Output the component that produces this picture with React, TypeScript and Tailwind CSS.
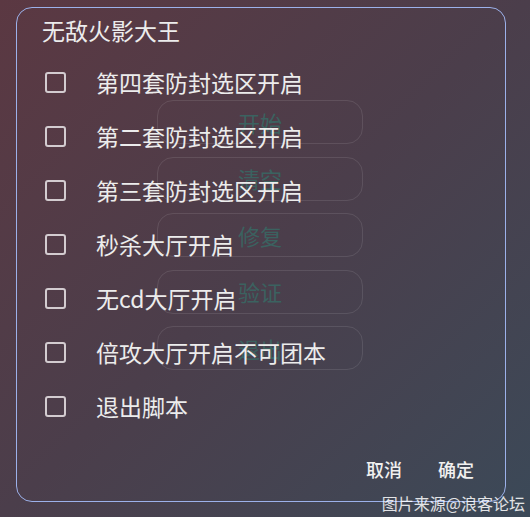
export default function App() {
  const options = [
    "第四套防封选区开启",
    "第二套防封选区开启",
    "第三套防封选区开启",
    "秒杀大厅开启",
    "无cd大厅开启",
    "倍攻大厅开启不可团本",
    "退出脚本",
  ];
  const menu = ["开始", "清空", "修复", "验证", "退出"];

  return (
    <div
      className="relative w-[530px] h-[517px] overflow-hidden bg-gradient-to-br from-[#5b3842] via-[#4b3e4b] to-[#3b4958]"
      style={{ fontFamily: '"Noto Sans CJK SC", "Noto Sans", sans-serif' }}
    >
      {/* page behind the dialog */}
      <div className="flex flex-col gap-[12.5px] pl-[157px] pt-[100px]">
        {menu.map((m) => (
          <div
            key={m}
            className="w-[206px] h-[44px] rounded-[16px] border border-white/10 flex items-center justify-center text-[22px] text-[#3b6260]"
          >
            {m}
          </div>
        ))}
      </div>

      {/* dialog */}
      <div className="absolute left-[16px] top-[7px] w-[490px] h-[495px] rounded-[16px] border border-[#9cb1ea] flex flex-col">
        <div className="h-[47px] pb-[3px] pl-[25px] flex items-center text-[23px] text-[#ececec]">
          无敌火影大王
        </div>
        {options.map((o) => (
          <div key={o} className="h-[54px] flex items-center pl-[28px] gap-[30px]">
            <div className="w-[21px] h-[21px] rounded-[3px] border-2 border-[#d3ccd0] shrink-0" />
            <span className="text-[23px] text-[#ececec]">{o}</span>
          </div>
        ))}
        <div className="mt-[9px] h-[54px] flex items-center justify-end gap-[36px] pr-[31px] text-[18px] font-medium text-[#f0f0f0]">
          <span>取消</span>
          <span>确定</span>
        </div>
      </div>

      {/* watermark */}
      <div className="absolute right-[5px] top-[491px] text-[16px] text-white/85">
        图片来源@浪客论坛
      </div>
    </div>
  );
}
